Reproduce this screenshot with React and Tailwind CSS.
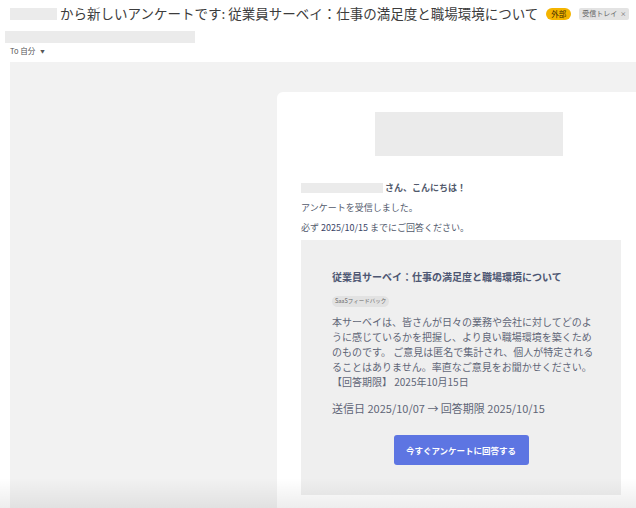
const jp = "font-['Noto_Sans_CJK_JP',sans-serif]";

const Placeholder = ({ className }) => <div className={`bg-[#ebebeb] ${className}`}></div>;

const App = () => {
    const bodyLines = [
        '本サーベイは、皆さんが日々の業務や会社に対してどのよ',
        'うに感じているかを把握し、より良い職場環境を築くため',
        'のものです。 ご意見は匿名で集計され、個人が特定される',
        'ることはありません。率直なご意見をお聞かせください。',
        '【回答期限】 2025年10月15日',
    ];

    return (
        <div className={`relative w-[636px] h-[508px] overflow-hidden bg-white ${jp}`}>
            {/* subject line */}
            <div className="flex items-center h-[26px] pl-[10px] pt-[1px]">
                <Placeholder className="w-[47px] h-[12px] mr-[3px]" />
                <h1 className="text-[13.5px] leading-none text-[#3c3c3c] whitespace-nowrap">
                    から新しいアンケートです: 従業員サーベイ：仕事の満足度と職場環境について
                </h1>
                <span className="ml-[8px] inline-flex items-center h-[12px] px-[5px] rounded-full bg-[#f4b400] text-[7.5px] leading-none text-[#3a2a00]">
                    外部
                </span>
                <span className="ml-[8px] inline-flex items-center h-[12px] px-[3px] rounded-[2px] bg-[#e3e3e3] text-[7px] leading-none text-[#5f5f5f]">
                    受信トレイ<span className="ml-[3px] text-[6px]">×</span>
                </span>
            </div>

            {/* sender */}
            <div className="pl-[5px] pt-[5px]">
                <Placeholder className="w-[190px] h-[12px]" />
            </div>
            <div className="flex items-center gap-[3px] pl-[10px] mt-[2px] h-[12px] text-[7.5px] text-[#555]">
                <span>To 自分</span>
                <span className="text-[4.5px] ml-[2px]">▼</span>
            </div>

            {/* message body */}
            <div className="ml-[10px] mt-[5px] h-[460px] bg-[#f2f2f2] pt-[30px] pl-[267px]">
                <div className="w-[600px] h-[420px] bg-white rounded-[6px] pt-[20px] pl-[24px]">
                    <Placeholder className="ml-[74px] w-[188px] h-[44px]" />

                    <div className="mt-[22px] text-[9px] leading-[20px] text-[#525a6c]">
                        <div className="flex items-center">
                            <Placeholder className="w-[82px] h-[10px] mr-[2px]" />
                            <span className="font-bold">さん、こんにちは！</span>
                        </div>
                        <div>アンケートを受信しました。</div>
                        <div>
                            必ず <span className="text-[#3a4566]">2025/10/15</span> までにご回答ください。
                        </div>
                    </div>

                    <div className="mt-[2px] w-[320px] bg-[#efefef] pt-[30px] pl-[31px] pb-[30px]">
                        <h2 className="text-[10px] leading-[14px] font-bold text-[#4d5672] whitespace-nowrap">
                            従業員サーベイ：仕事の満足度と職場環境について
                        </h2>
                        <span className="mt-[12px] inline-flex items-center h-[11px] px-[3px] rounded-full bg-[#e2e2e2] text-[5.5px] leading-none text-[#666]">
                            SaaSフィードバック
                        </span>
                        <div className="mt-[6px] text-[10px] leading-[15px] text-[#5f6677]">
                            {bodyLines.map((line) => (
                                <div key={line} className="whitespace-nowrap">{line}</div>
                            ))}
                        </div>
                        <div className="mt-[12px] text-[11px] leading-[15px] text-[#5f6677] whitespace-nowrap">
                            送信日 2025/10/07 → 回答期限 2025/10/15
                        </div>
                        <div className="mt-[19px] pr-[31px] flex justify-center">
                            <button className="w-[135px] h-[30px] rounded-[3px] bg-[#5d75e2] text-white text-[8.5px] font-bold">
                                今すぐアンケートに回答する
                            </button>
                        </div>
                    </div>
                </div>
            </div>

            {/* bottom scroll fade */}
            <div className="absolute left-0 right-0 bottom-0 h-[30px] bg-gradient-to-b from-transparent to-black/[0.07] pointer-events-none"></div>
        </div>
    );
};

export default App;
